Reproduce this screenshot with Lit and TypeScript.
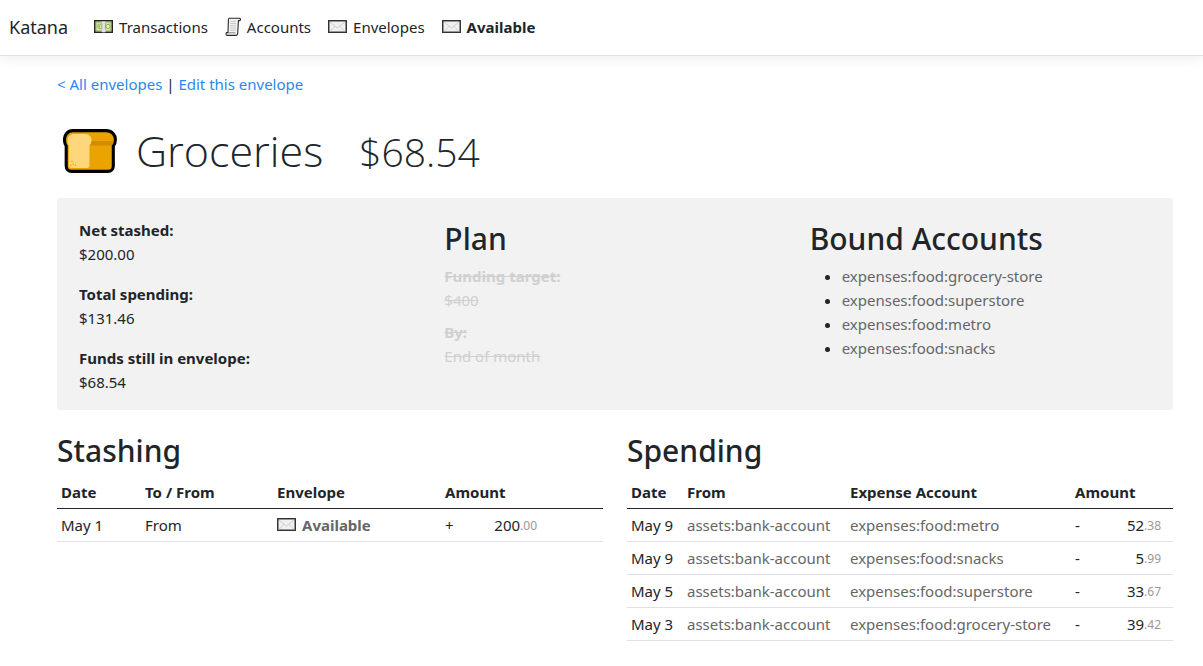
import { LitElement, html, css } from "lit";
import { customElement } from "lit/decorators.js";

const envelopeIcon = html`<svg class="icon wide" viewBox="0 0 20 14" aria-hidden="true">
  <rect x="0.75" y="0.75" width="17.5" height="11.5" fill="#f0f0f0" stroke="#26282a" stroke-width="1.4"/>
  <path d="M2 2 L9.5 8 L17 2 M2 11.4 L7.2 6.2 M17 11.4 L11.8 6.2" fill="none" stroke="#cfcfcf" stroke-width="1"/>
</svg>`;

const billIcon = html`<svg class="icon wide" viewBox="0 0 20 14" aria-hidden="true">
  <rect x="0.75" y="0.75" width="17.5" height="11.5" fill="#d3e6a4" stroke="#23261e" stroke-width="1.5"/>
  <rect x="2" y="2" width="15" height="9" fill="none" stroke="#8d9c6c" stroke-width="0.8"/>
  <path d="M6.6 4.4C5 3.600 3.600 4.600 3.800 6.300C3.900 8.200 5.400 9 6.800 8.200M5.400 5.400v2" fill="none" stroke="#8fae4e" stroke-width="1"/>
  <ellipse cx="14" cy="6.400" rx="1.900" ry="2.100" fill="#ecf6d0" stroke="#8fae4e" stroke-width="1"/>
  <rect x="7.800" y="1.500" width="3.600" height="10.800" fill="#e4e4e4"/>
  <path d="M7.800 3v6.500M11.400 3v6.500" stroke="#8c8c86" stroke-width="0.7"/>
</svg>`;

const scrollIcon = html`<svg class="icon tall" viewBox="0 0 17 20" aria-hidden="true">
  <path d="M4.2 1.2H14.2C15.6 1.2 15.9 2.600 15 3.6H13.4L12.7 16.2C12.6 17.6 11.8 18.4 10.8 18.4H2.2C0.9 18.4 0.6 16.6 1.5 15.6H3L3.4 3.2C3.2 2.2 3.6 1.4 4.2 1.2Z" fill="#f4f4f4" stroke="#26282a" stroke-width="1.1" stroke-linejoin="round"/>
  <path d="M5.4 4.4h5.8M5.3 6.6h5.8M5.2 8.8h5.8M5.1 11h5.8M5 13.2h5.8" stroke="#bdbdbd" stroke-width="0.9"/>
  <path d="M3 15.8h7.4" stroke="#777" stroke-width="0.9"/>
</svg>`;

const breadIcon = html`<svg class="bread" viewBox="0 0 54 44" aria-hidden="true">
  <path d="M10 1.6H43C49 1.6 52.4 6 52.4 10.5C52.4 13.5 51.6 15.6 50.3 17V37C50.3 40 48 42.4 45 42.4H8.5C5.5 42.4 3.2 40 3.2 37V17C2 15.6 1.5 13.5 1.5 10.5C1.5 6 4.5 1.6 10 1.6Z" fill="#eaa300" stroke="#000" stroke-width="3.1"/>
  <path d="M27 12H50.5C50.2 14 49.5 15.5 48.500 16.500H26Z" fill="#d38b00"/>
  <path d="M11 5H22C26.5 5 29 8.5 28.5 12C28.2 14.2 27.5 15.5 26.5 16.5V36C26.5 38 25.5 39 24 39H8.5C6.8 39 5.8 38 5.8 36V16.5C4.8 15.5 4.500 13.5 4.600 11C4.700 7.500 7.500 5 11 5Z" fill="#ffd67a"/>
  <g fill="#eaa300"><circle cx="9" cy="32.500" r=".8"/><circle cx="7.800" cy="36.200" r=".8"/><circle cx="10.300" cy="35" r=".8"/><circle cx="12.500" cy="36.200" r=".8"/></g>
</svg>`;

const boundAccounts = ["grocery-store", "superstore", "metro", "snacks"].map((n) => `expenses:food:${n}`);

const spending = [
  { date: "May 9", account: "metro", whole: "52", cents: ".38" },
  { date: "May 9", account: "snacks", whole: "5", cents: ".99" },
  { date: "May 5", account: "superstore", whole: "33", cents: ".67" },
  { date: "May 3", account: "grocery-store", whole: "39", cents: ".42" },
];

const amount = (sign: string, whole: string, cents: string) => html`<span class="amount">
  <span>${sign}</span><span>${whole}<span class="cents">${cents}</span></span>
</span>`;

@customElement("app-root")
export class AppRoot extends LitElement {
  static styles = css`
    :host {
      display: block;
      font: 15px/24px "Noto Sans", "Open Sans", sans-serif;
      color: #212529;
      background: #fff;
    }
    * { box-sizing: border-box; }
    a { text-decoration: none; color: inherit; }
    h1, h2, p, dl, dd, ul { margin: 0; padding: 0; }
    .nav {
      display: flex;
      align-items: center;
      gap: 17px;
      height: 56px;
      padding: 0 9px 1px;
      border-bottom: 1px solid #dee2e6;
      box-shadow: 0 2px 12px rgba(0, 0, 0, 0.08);
    }
    .brand { font-size: 18px; margin-right: 9px; }
    .link { display: inline-flex; align-items: center; gap: 5px; vertical-align: top; }
    .strong { font-weight: 700; }
    .icon { flex: none; display: block; }
    .wide { width: 20px; height: 14px; }
    .tall { width: 17px; height: 20px; }
    .page { padding: 16px 30px 24px 57px; }
    .crumbs a { color: #2b87f0; }
    .title {
      display: flex;
      align-items: center;
      height: 58px;
      margin: 26px 0 18px;
      font: 300 43px/58px "Open Sans", sans-serif;
    }
    .figures { display: flex; align-items: baseline; gap: 36px; }
    .bread { width: 54px; height: 44px; margin: 0 19px 0 6px; }
    .balance { font-size: 39px; }
    h2 { font-size: 30px; line-height: 42px; font-weight: 500; margin-bottom: 4px; }
    .panel {
      display: grid;
      grid-template-columns: repeat(3, 1fr);
      padding: 20px 10px 16px;
      border-radius: 4px;
      background: #f2f2f2;
      margin-bottom: 20px;
    }
    .panel > * { padding: 0 12px; }
    dt { font-weight: 700; }
    .stats, .plan dl { display: grid; }
    .stats { gap: 16px; }
    .plan dl { gap: 8px; color: #d0d0d0; text-decoration: line-through; }
    .bound ul { padding-left: 32px; }
    .muted { color: #666; }
    .tables { display: grid; grid-template-columns: 1fr 1fr; gap: 24px; }
    table { width: 100%; border-collapse: separate; border-spacing: 0; table-layout: fixed; }
    th, td { padding: 4px; text-align: left; white-space: nowrap; border-bottom: 1px solid #dee2e6; }
    th { border-bottom-color: #212529; font-weight: 700; }
    .s-date { width: 84px; }
    .s-dir { width: 132px; }
    .s-env { width: 168px; }
    .p-date { width: 56px; }
    .p-from { width: 163px; }
    .p-acc { width: 225px; }
    .amount { display: flex; justify-content: space-between; width: 92px; }
    .spending .amount { width: 86px; }
    .cents { font-size: 12px; color: #999; line-height: 12px; vertical-align: 1px; }
  `;

  render() {
    return html`
      <nav class="nav">
        <a class="brand" href="#">Katana</a>
        <a class="link" href="#transactions">${billIcon}Transactions</a>
        <a class="link" href="#accounts">${scrollIcon}Accounts</a>
        <a class="link" href="#envelopes">${envelopeIcon}Envelopes</a>
        <a class="link strong" href="#available">${envelopeIcon}Available</a>
      </nav>
      <main class="page">
        <div class="crumbs"><a href="#envelopes">&lt; All envelopes</a> | <a href="#edit">Edit this envelope</a></div>
        <h1 class="title">
          ${breadIcon}
          <span class="figures"><span>Groceries</span><span class="balance">$68.54</span></span>
        </h1>
        <section class="panel">
          <dl class="stats">
            <div><dt>Net stashed:</dt><dd>$200.00</dd></div>
            <div><dt>Total spending:</dt><dd>$131.46</dd></div>
            <div><dt>Funds still in envelope:</dt><dd>$68.54</dd></div>
          </dl>
          <div class="plan">
            <h2>Plan</h2>
            <dl>
              <div><dt>Funding target:</dt><dd>$400</dd></div>
              <div><dt>By:</dt><dd>End of month</dd></div>
            </dl>
          </div>
          <div class="bound">
            <h2>Bound Accounts</h2>
            <ul>${boundAccounts.map((a) => html`<li><a class="muted" href="#account">${a}</a></li>`)}</ul>
          </div>
        </section>
        <div class="tables">
          <section>
            <h2>Stashing</h2>
            <table>
              <colgroup><col class="s-date"><col class="s-dir"><col class="s-env"><col></colgroup>
              <thead><tr><th>Date</th><th>To / From</th><th>Envelope</th><th>Amount</th></tr></thead>
              <tbody><tr>
                <td>May 1</td><td>From</td>
                <td><a class="link strong muted" href="#available">${envelopeIcon}Available</a></td>
                <td>${amount("+", "200", ".00")}</td>
              </tr></tbody>
            </table>
          </section>
          <section class="spending">
            <h2>Spending</h2>
            <table>
              <colgroup><col class="p-date"><col class="p-from"><col class="p-acc"><col></colgroup>
              <thead><tr><th>Date</th><th>From</th><th>Expense Account</th><th>Amount</th></tr></thead>
              <tbody>${spending.map((r) => html`<tr>
                <td>${r.date}</td>
                <td><a class="muted" href="#account">assets:bank-account</a></td>
                <td><a class="muted" href="#account">expenses:food:${r.account}</a></td>
                <td>${amount("-", r.whole, r.cents)}</td>
              </tr>`)}</tbody>
            </table>
          </section>
        </div>
      </main>
    `;
  }
}
